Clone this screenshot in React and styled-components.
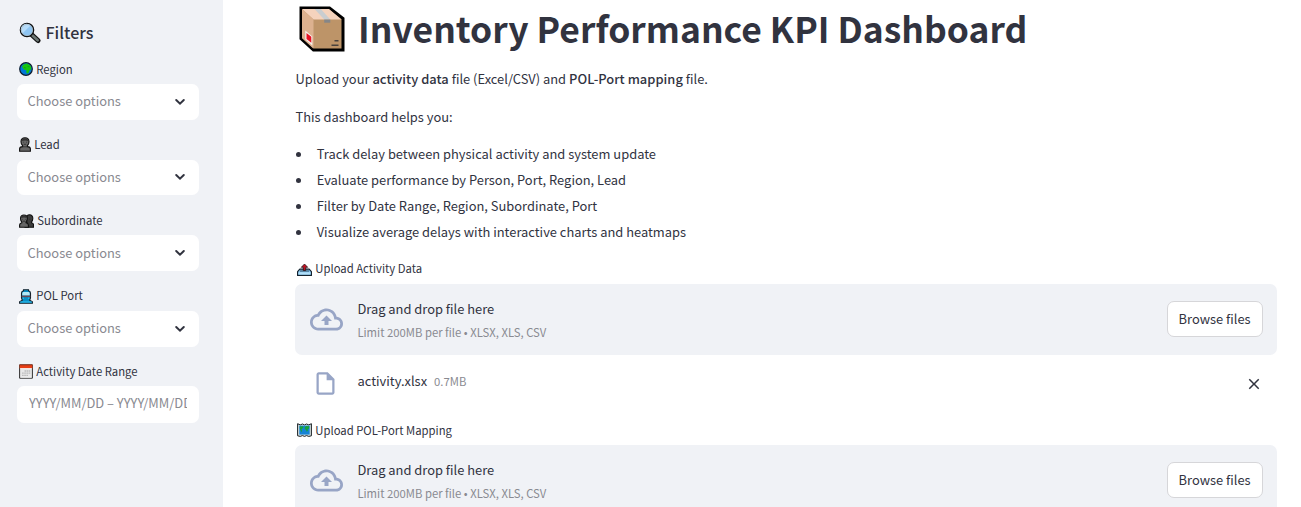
import React from "react";
import styled, { createGlobalStyle } from "styled-components";

const GlobalStyle = createGlobalStyle`
  * { box-sizing: border-box; }
  html, body { margin: 0; height: 100%; overflow: hidden; background: #fff; }
  body {
    color: #31333f;
    font-family: "Source Sans Pro", "Noto Sans CJK JP", "Noto Sans", sans-serif;
    font-size: 12.9px;
  }
`;

const Page = styled.div`
  display: flex;
  height: 507px;
  overflow: hidden;
`;

const Sidebar = styled.aside`
  flex: 0 0 223px;
  min-width: 0;
  padding: 19px 24px 0 17px;
  background: #f0f2f6;
`;

const SidebarTitle = styled.h2`
  display: flex;
  align-items: center;
  gap: 4.5px;
  height: 27px;
  margin: 0 0 12.6px 2px;
  font-size: 16.1px;
  font-weight: 500;
  line-height: 27px;
`;

const Field = styled.div`
  margin-bottom: 14.4px;
`;

const Label = styled.label`
  display: flex;
  align-items: center;
  gap: 3.3px;
  height: 21.6px;
  margin-bottom: 3.8px;
  padding-left: 2px;
  font-size: 11.3px;
  line-height: 21.6px;
  white-space: nowrap;
`;

const SelectBox = styled.div`
  display: flex;
  align-items: center;
  justify-content: space-between;
  height: 35.8px;
  padding: 0 13px 0 10.5px;
  border-radius: 7px;
  background: #fff;
  color: #898a91;
`;

const SelectText = styled.span`
  padding-bottom: 2px;
`;

const DateBox = styled(SelectBox)`
  height: 36.5px;
  padding: 0 12px;
`;

const DateText = styled.span`
  overflow: hidden;
  padding-bottom: 4px;
  white-space: nowrap;
`;

const Main = styled.main`
  flex: 1;
  padding: 4px 24px 0 72px;
`;

const Title = styled.h1`
  display: flex;
  align-items: center;
  gap: 13px;
  height: 50px;
  margin: 0 0 13px;
  padding-left: 4px;
  font-size: 35.45px;
  font-weight: 700;
  line-height: 50px;
  white-space: nowrap;
`;

const TitleText = styled.span`
  padding-bottom: 2px;
`;

const Paragraph = styled.p`
  margin: 0 0 ${(p) => (p.$last ? 13 : 15)}px;
  padding-left: 0.5px;
  line-height: 23px;
`;

const Strong = styled.strong`
  font-weight: 500;
  letter-spacing: 0.03px;
`;

const List = styled.ul`
  margin: 0 0 13.4px;
  padding: 0;
  list-style: none;
`;

const Item = styled.li`
  display: flex;
  align-items: center;
  gap: 15.7px;
  height: 26px;
  line-height: 26px;

  &::before {
    content: "";
    width: 5px;
    height: 5px;
    margin-left: 1px;
    border-radius: 50%;
    background: #31333f;
  }
`;

const Dropzone = styled.section`
  display: flex;
  align-items: center;
  height: 71px;
  padding: 0 14.4px 0 15.2px;
  border-radius: 7px;
  background: #f0f2f6;
`;

const DropText = styled.div`
  flex: 1;
  margin-left: 14.2px;
`;

const DropTitle = styled.div`
  height: 23px;
  line-height: 23px;
`;

const Hint = styled.div`
  height: 22px;
  color: #898a91;
  font-size: 11.3px;
  line-height: 24.6px;
`;

const BrowseButton = styled.button`
  width: 96px;
  height: 36px;
  padding: 0;
  border: 1px solid #d6d6d9;
  border-radius: 7px;
  background: #fff;
  color: inherit;
  font: inherit;
  line-height: 32px;
`;

const FileRow = styled.div`
  display: flex;
  align-items: center;
  height: 57.6px;
  margin-bottom: 7.2px;
  padding: 0 14.4px 0 17px;
`;

const FileName = styled.span`
  margin-left: 18.5px;
  padding-bottom: 4.6px;
  line-height: 24px;
`;

const FileSize = styled.span`
  flex: 1;
  margin-left: 7px;
  padding-bottom: 4.6px;
  color: #898a91;
  font-size: 11.3px;
  line-height: 24px;
`;

const Svg = styled.svg`
  display: block;
  flex: none;
`;

const Chevron = () => (
  <Svg width="12" height="10" viewBox="0 0 12 10" fill="none">
    <path d="M2.2 3 6 6.7 9.8 3" stroke="#31333f" strokeWidth="2" strokeLinecap="round" />
  </Svg>
);

const CloudIcon = () => (
  <Svg width="33" height="33" viewBox="0 0 24 24" fill="#98a5c6">
    <path d="M19.35 10.04C18.67 6.59 15.64 4 12 4 9.11 4 6.6 5.64 5.35 8.04 2.34 8.36 0 10.91 0 14c0 3.31 2.69 6 6 6h13c2.76 0 5-2.24 5-5 0-2.64-2.05-4.78-4.65-4.96zM19 18H6c-2.21 0-4-1.79-4-4 0-2.05 1.53-3.76 3.56-3.97l1.07-.11.5-.95C8.08 7.14 9.94 6 12 6c2.62 0 4.88 1.86 5.39 4.43l.3 1.5 1.53.11c1.56.1 2.78 1.41 2.78 2.96 0 1.65-1.35 3-3 3zM8 13h2.55v3h2.9v-3H16l-4-4z" />
  </Svg>
);

const FileIcon = () => (
  <Svg width="27" height="27" viewBox="0 0 24 24" fill="#98a5c6">
    <path d="M14 2H6c-1.1 0-1.99.9-1.99 2L4 20c0 1.1.89 2 1.99 2H18c1.1 0 2-.9 2-2V8l-6-6zM6 20V4h7v5h5v11H6z" />
  </Svg>
);

const CloseIcon = () => (
  <Svg width="18" height="18" viewBox="0 0 24 24" fill="#31333f">
    <path d="M19 6.41 17.59 5 12 10.59 6.41 5 5 6.41 10.59 12 5 17.59 6.41 19 12 13.41 17.59 19 19 17.59 13.41 12z" />
  </Svg>
);

const Magnifier = () => (
  <Svg width="22" height="22" viewBox="0 0 22 22">
    <path d="m12.5 12.5 6.5 6" stroke="#111" strokeWidth="5" strokeLinecap="round" />
    <path d="m13.5 13.5 5.2 4.8" stroke="#6b7774" strokeWidth="2.6" strokeLinecap="round" />
    <circle cx="8" cy="8" r="6.6" fill="#8ec5f2" stroke="#111" strokeWidth="1.4" />
    <path d="M3.4 11.5A5.7 5.7 0 0 1 11.5 3.4z" fill="#b5dcfa" />
    <circle cx="8" cy="8" r="5.6" fill="none" stroke="#a9b7bd" strokeWidth=".7" />
  </Svg>
);

const Globe = () => (
  <Svg width="14" height="14" viewBox="0 0 14 14">
    <circle cx="7" cy="7" r="6.3" fill="#0078d7" stroke="#101c2b" strokeWidth="1.2" />
    <path d="M3 4.600 4.600 2.500l3.200-.9 3.300 1.600 1.300 2.900-.8 2-1.200.4-.8 2.300-1.500.9-.9-1.600.3-1.900-2.700-.6-1-1.500z" fill="#16c60c" />
    <path d="m8.500 4.300 2 .5M5 5.500l1.800.4" stroke="#0f9c16" strokeWidth=".8" />
  </Svg>
);

const Person = () => (
  <Svg width="12" height="15" viewBox="0 0 12 15">
    <path d="M.6 14.300v-2.500c0-1.300 1-2 3-2.200V8.500C2.500 7.500 2 6.300 2 4.700 2 2.200 3.700.7 6 .7s4 1.500 4 4c0 1.600-.5 2.800-1.600 3.800v1.100c2 .2 3 .9 3 2.200v2.500z" fill="#666" stroke="#111" strokeWidth="1.100" />
    <path d="M2.500 4C3 1.800 4.300 1.200 6 1.200s3.100.8 3.500 2.800L6 3.400z" fill="#333" />
    <path d="M4.300 5.200h.8M7 5.200h.8M4.800 7.300h2.400M3.600 9.800h4.800" stroke="#292929" strokeWidth=".8" />
  </Svg>
);

const People = () => (
  <Svg width="15" height="14" viewBox="0 0 15 14">
    <path d="M6 13.300V9.200l2-1C7.300 7 7 6 7.200 4.200 7.400 2 8.700.8 10.500.8c2.200 0 3.400 1.500 3.300 3.700 0 1.500-.5 2.500-1.300 3.300v.9c1.300.3 2 .9 2 2v2.600z" fill="#3c3c3c" stroke="#111" strokeWidth="1.100" />
    <path d="M.6 13.300v-2.200c0-1.300.8-2 2.200-2.300v-.9C1.900 7 1.500 6 1.500 4.600c0-2.200 1.300-3.600 3.400-3.600s3.500 1.400 3.500 3.600c0 1.400-.5 2.400-1.400 3.300v.9c1.500.3 2.400 1 2.400 2.300v2.200z" fill="#666" stroke="#111" strokeWidth="1.100" />
    <path d="M2 4c.4-1.700 1.400-2.400 3-2.400S7.500 2.400 8 4L5 3.400z" fill="#333" />
    <path d="M3.400 5.300h.7M5.900 5.300h.7M3.800 7.200h2.200M10.500 5.300h.7" stroke="#202020" strokeWidth=".8" />
  </Svg>
);

const Station = () => (
  <Svg width="14" height="15" viewBox="0 0 14 15">
    <path d="M4.500 1.800V.7h5v1.100c1.300.3 2 1.200 2 2.500v4.500l-.8 2.400 2.700 1.500v1.600H.6v-1.600l2.700-1.500-.8-2.400V4.300c0-1.300.7-2.200 2-2.500z" fill="#078fc8" stroke="#15212a" strokeWidth="1.100" />
    <path d="M3.300 4.500c0-1 .6-1.500 1.500-1.500h4.400c1 0 1.500.5 1.500 1.500v2H3.300z" fill="#b6e7f5" />
    <path d="M2.700 6.600h8.600v1.600H2.700z" fill="#6b4a55" />
    <path d="M3.600 9.200h1.400M9 9.200h1.400M1.200 13h11.600" stroke="#37c6f4" strokeWidth="1" />
  </Svg>
);

const Calendar = () => (
  <Svg width="14" height="15" viewBox="0 0 14 15">
    <path d="M.6.8h12.800v13.400H.6z" fill="#e8e8e8" stroke="#303030" strokeWidth="1" />
    <path d="M.6.800h12.800v3.600H.6z" fill="#e83f16" />
    <path d="M.6 1h12.800" stroke="#a53318" strokeWidth=".8" />
    <path d="M5.500 7h5.800M3 9.200h8.300M3 11.400h6" stroke="#bcbcbc" strokeWidth="1.300" strokeDasharray="1.700 .5" />
    <path d="M1.200 4.500h11.600M1.500 13.300h11" stroke="#fff" strokeWidth=".7" />
  </Svg>
);

const Package = () => (
  <Svg width="46" height="46" viewBox="0 0 46 46">
    <path d="M2 2h28.500L44 12.500V44H14.500L2 32.500z" fill="#bd9468" stroke="#000" strokeWidth="3" />
    <path d="M3 3h27l12.500 10.500h-28z" fill="#f5d3bd" />
    <path d="m3 3 11.500 10.500v29.300L3 32.200z" fill="#dcb18f" />
    <path d="M15.500 3h6.300l9.500 10.500h-6z" fill="#c9cdd0" />
    <path d="M25.200 13.500h6.100v3.200h-6.100z" fill="#858688" />
    <path d="m6.300 24.500 7 6v9l-7-6z" fill="#f7f2ed" />
    <path d="m7.500 27 4.800 3.800v6l-4.800-3.800z" fill="#e81224" />
    <path d="M35.500 34.700h4M32.500 39.200h7" stroke="#49423d" strokeWidth="1.600" />
  </Svg>
);

const Outbox = () => (
  <Svg width="15" height="13" viewBox="0 0 15 13">
    <path d="M2.800 6.200h9.400l2.200 2.500v3.700H.6V8.700z" fill="#83c5ef" stroke="#14222e" strokeWidth="1.200" strokeLinejoin="round" />
    <path d="M1.500 9.300h12v2.200h-12z" fill="#b3dff8" />
    <path d="M3 8h9" stroke="#24394a" strokeWidth=".9" />
    <path d="M7.500 1 10.700 4.300H8.700v3.200H6.300V4.300h-2z" fill="#c50f1f" stroke="#25151a" strokeWidth=".8" />
  </Svg>
);

const WorldMap = () => (
  <Svg width="15" height="14" viewBox="0 0 15 14">
    <path d="m.6.700 2.600 1.200L5.500 1l2 .9 2-.9 2.300.9L14.400.7v12.100l-2.600.6-2.300-.8-2 .8-2-.8-2.300.8-2.600-.6z" fill="#d5dfe0" stroke="#1a2124" strokeWidth="1" />
    <path d="M2.300 2.600h10.400v9H2.300z" fill="#1583d4" />
    <path d="m2.700 3.400 3.300-.1.500 1-1.300 1.400-.9.900.8 1.200-.6 1.500L3.800 7.700 2.900 6zM7.700 4.300 9.300 3l2.900.3-.1 2.200-1.400.8.200 1.400-1.200 1.100-.7-2-1.300-.7z" fill="#16a33a" />
  </Svg>
);

const SelectField = ({ icon, label }) => (
  <Field>
    <Label>{icon}{label}</Label>
    <SelectBox><SelectText>Choose options</SelectText><Chevron /></SelectBox>
  </Field>
);

const Uploader = ({ icon, label }) => (
  <>
    <Label>{icon}{label}</Label>
    <Dropzone>
      <CloudIcon />
      <DropText>
        <DropTitle>Drag and drop file here</DropTitle>
        <Hint>Limit 200MB per file • XLSX, XLS, CSV</Hint>
      </DropText>
      <BrowseButton>Browse files</BrowseButton>
    </Dropzone>
  </>
);

export default function App() {
  return (
    <Page>
      <GlobalStyle />
      <Sidebar>
        <SidebarTitle><Magnifier />Filters</SidebarTitle>
        <SelectField icon={<Globe />} label="Region" />
        <SelectField icon={<Person />} label="Lead" />
        <SelectField icon={<People />} label="Subordinate" />
        <SelectField icon={<Station />} label="POL Port" />
        <Field>
          <Label><Calendar />Activity Date Range</Label>
          <DateBox><DateText>YYYY/MM/DD – YYYY/MM/DD</DateText></DateBox>
        </Field>
      </Sidebar>
      <Main>
        <Title><Package /><TitleText>Inventory Performance KPI Dashboard</TitleText></Title>
        <Paragraph>
          Upload your <Strong>activity data</Strong> file (Excel/CSV) and <Strong>POL-Port mapping</Strong> file.
        </Paragraph>
        <Paragraph $last>This dashboard helps you:</Paragraph>
        <List>
          <Item>Track delay between physical activity and system update</Item>
          <Item>Evaluate performance by Person, Port, Region, Lead</Item>
          <Item>Filter by Date Range, Region, Subordinate, Port</Item>
          <Item>Visualize average delays with interactive charts and heatmaps</Item>
        </List>
        <Uploader icon={<Outbox />} label="Upload Activity Data" />
        <FileRow>
          <FileIcon />
          <FileName>activity.xlsx</FileName>
          <FileSize>0.7MB</FileSize>
          <CloseIcon />
        </FileRow>
        <Uploader icon={<WorldMap />} label="Upload POL-Port Mapping" />
      </Main>
    </Page>
  );
}
